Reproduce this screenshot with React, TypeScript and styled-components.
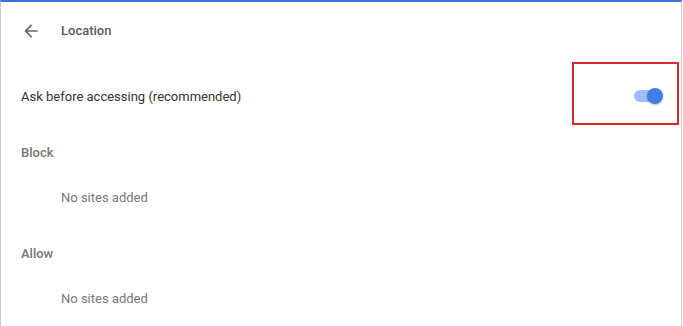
import React from "react";
import styled, { createGlobalStyle } from "styled-components";

const Global = createGlobalStyle`
  html, body { margin: 0; padding: 0; background: #fff; }
  body { font-family: Roboto, "Noto Sans", Arial, sans-serif; -webkit-font-smoothing: antialiased; }
`;

const Frame = styled.div`
  width: 680px;
  height: 324px;
  margin-right: 1px;
  border-top: 2px solid #3d6fd9;
  border-left: 1px solid #c9c9c9;
  border-right: 1px solid #c9c9c9;
  background: #fff;
  display: flex;
  flex-direction: column;
  overflow: hidden;
`;

const Header = styled.div`
  height: 56px;
  display: flex;
  align-items: center;
  padding-left: 20px;
  gap: 20px;
`;

const BackButton = styled.button`
  border: 0;
  background: none;
  padding: 0;
  width: 20px;
  height: 20px;
  display: flex;
  color: #6b6b6b;
  margin-top: 2px;
`;

const Title = styled.h1`
  margin: 0;
  font-size: 13px;
  font-weight: 500;
  color: #5a5a5a;
`;

const ToggleRow = styled.div`
  position: relative;
  margin-top: 11px;
  height: 54px;
  display: flex;
  align-items: center;
  justify-content: space-between;
  padding: 0 18px 0 20px;
  font-size: 13px;
  color: #333;
`;

const Highlight = styled.div`
  position: absolute;
  left: 571px;
  top: -7px;
  width: 103px;
  height: 59px;
  border: 2px solid #d6262f;
  pointer-events: none;
`;

const Toggle = styled.div<{ $on: boolean }>`
  position: relative;
  width: 26px;
  height: 12px;
  border-radius: 6px;
  background: ${(p) => (p.$on ? "#9fbff6" : "#bdbdbd")};
  margin-right: 3px;
`;

const Knob = styled.div<{ $on: boolean }>`
  position: absolute;
  top: -2px;
  left: ${(p) => (p.$on ? "13px" : "-3px")};
  width: 16px;
  height: 16px;
  border-radius: 50%;
  background: ${(p) => (p.$on ? "#3f7ee8" : "#f1f1f1")};
  box-shadow: 0 1px 2px rgba(0, 0, 0, 0.25);
`;

const SectionHeader = styled.div`
  margin-top: 11px;
  height: 36px;
  display: flex;
  align-items: center;
  padding-left: 20px;
  font-size: 13px;
  font-weight: 500;
  color: #767676;
`;

const EmptyItem = styled.div`
  height: 54px;
  display: flex;
  align-items: center;
  padding-left: 60px;
  font-size: 13px;
  color: #777;
`;

const ArrowIcon = () => (
  <svg width="20" height="20" viewBox="0 0 24 24" fill="currentColor">
    <path d="M20 11H7.83l5.59-5.59L12 4l-8 8 8 8 1.41-1.41L7.83 13H20v-2z" />
  </svg>
);

const sections = ["Block", "Allow"];

export default function App() {
  return (
    <>
      <Global />
      <Frame>
        <Header>
          <BackButton aria-label="Back">
            <ArrowIcon />
          </BackButton>
          <Title>Location</Title>
        </Header>
        <ToggleRow>
          <span>Ask before accessing (recommended)</span>
          <Toggle $on>
            <Knob $on />
          </Toggle>
          <Highlight />
        </ToggleRow>
        {sections.map((s) => (
          <React.Fragment key={s}>
            <SectionHeader>{s}</SectionHeader>
            <EmptyItem>No sites added</EmptyItem>
          </React.Fragment>
        ))}
      </Frame>
    </>
  );
}
